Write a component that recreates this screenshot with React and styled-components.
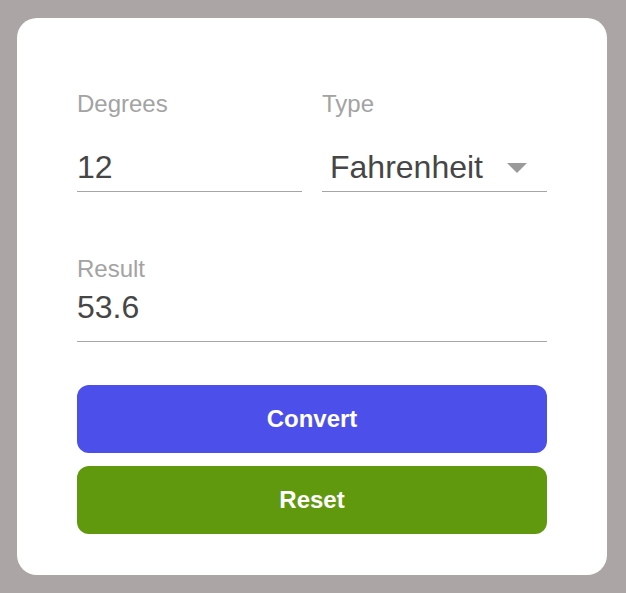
import React, { useState } from "react";
import styled, { createGlobalStyle } from "styled-components";

const Global = createGlobalStyle`
  html, body { margin: 0; padding: 0; background: #aba5a5; }
  body { font-family: "Liberation Sans", Arial, sans-serif; }
  * { box-sizing: border-box; }
`;

const Page = styled.div`
  padding: 18px 0 18px 17px;
  height: 593px;
`;

const Card = styled.div`
  width: 590px;
  height: 557px;
  background: #ffffff;
  border-radius: 20px;
  padding: 72px 60px 41px;
  display: flex;
  flex-direction: column;
`;

const Row = styled.div`
  display: grid;
  grid-template-columns: 1fr 1fr;
  column-gap: 20px;
`;

const Field = styled.div`
  display: flex;
  flex-direction: column;
  position: relative;
  margin-top: ${(p) => p.$mt || 0}px;
`;

const Label = styled.label`
  font-size: 24px;
  line-height: 28px;
  color: #a3a3a3;
`;

const Control = styled.div`
  position: relative;
  margin-top: ${(p) => p.$gap}px;
  padding-bottom: ${(p) => p.$pb}px;
  border-bottom: 1px solid #a6a6a6;
`;

const Input = styled.input`
  display: block;
  width: 100%;
  height: 36px;
  border: none;
  outline: none;
  padding: 0;
  margin: 0;
  background: transparent;
  font-family: inherit;
  font-size: 32px;
  line-height: 36px;
  color: #464646;
`;

const Select = styled.select`
  display: block;
  width: 100%;
  height: 36px;
  border: none;
  outline: none;
  padding: 0 0 0 8px;
  margin: 0;
  background: transparent;
  appearance: none;
  -webkit-appearance: none;
  font-family: inherit;
  font-size: 32px;
  line-height: 36px;
  color: #464646;
`;

const Arrow = styled.span`
  position: absolute;
  right: 20px;
  top: 14px;
  width: 0;
  height: 0;
  border-left: 10px solid transparent;
  border-right: 10px solid transparent;
  border-top: 10px solid #9a9a9a;
  pointer-events: none;
`;

const Buttons = styled.div`
  display: flex;
  flex-direction: column;
  gap: 13px;
  margin-top: 43px;
`;

const Button = styled.button`
  height: 68px;
  width: 100%;
  border: none;
  border-radius: 12px;
  background: ${(p) => p.$bg};
  color: #ffffff;
  font-family: inherit;
  font-weight: 700;
  font-size: 24px;
  cursor: pointer;
`;

export default function App() {
  const [deg, setDeg] = useState("12");
  const [type, setType] = useState("Fahrenheit");
  return (
    <>
      <Global />
      <Page>
        <Card>
          <Row>
            <Field>
              <Label>Degrees</Label>
              <Control $gap={31} $pb={6}>
                <Input value={deg} onChange={(e) => setDeg(e.target.value)} />
              </Control>
            </Field>
            <Field>
              <Label>Type</Label>
              <Control $gap={31} $pb={6}>
                <Select value={type} onChange={(e) => setType(e.target.value)}>
                  <option>Fahrenheit</option>
                  <option>Celsius</option>
                </Select>
                <Arrow />
              </Control>
            </Field>
          </Row>
          <Field $mt={63}>
            <Label>Result</Label>
            <Control $gap={6} $pb={16}>
              <Input value="53.6" readOnly />
            </Control>
          </Field>
          <Buttons>
            <Button $bg="#4c4fe9">Convert</Button>
            <Button $bg="#61990e">Reset</Button>
          </Buttons>
        </Card>
      </Page>
    </>
  );
}
